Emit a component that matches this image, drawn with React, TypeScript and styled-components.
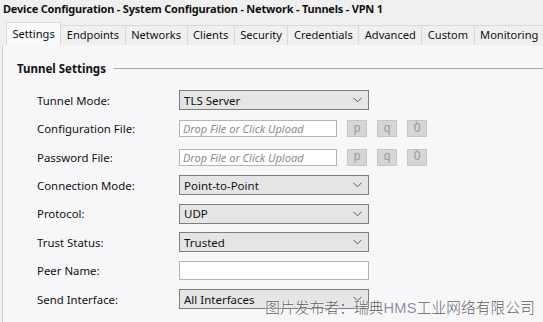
import React from "react";
import styled, { createGlobalStyle } from "styled-components";

const GlobalStyle = createGlobalStyle`
  html, body { margin: 0; padding: 0; background: #f0f0f0; }
  body { font-family: "Noto Sans", "Liberation Sans", sans-serif; color: #1a1a1a; }
  * { box-sizing: border-box; }
`;

const Window = styled.div`
  position: relative;
  width: 543px;
  height: 322px;
  overflow: hidden;
  display: flex;
  flex-direction: column;
  background: #f0f0f0;
`;

const Title = styled.div`
  height: 22px;
  padding: 1px 0 0 3px;
  font-size: 11px;
  font-weight: 700;
  line-height: 16px;
  color: #111;
  letter-spacing: -0.2px;
  white-space: nowrap;
`;

const TabBar = styled.div`
  display: flex;
  align-items: flex-end;
  height: 23px;
  padding-left: 6px;
`;

const Tab = styled.div<{ $active?: boolean }>`
  height: ${(p) => (p.$active ? "23px" : "20px")};
  padding: ${(p) => (p.$active ? "2px 5.5px 0" : "0 5.5px")};
  border: 1px solid #d9d9d9;
  border-bottom: none;
  margin-left: ${(p) => (p.$active ? "0" : "-1px")};
  background: ${(p) => (p.$active ? "#f9f9f9" : "#f0f0f0")};
  font-size: 11.1px;
  line-height: 18px;
  color: #111;
  white-space: nowrap;
  position: relative;
  z-index: ${(p) => (p.$active ? 1 : 0)};
`;

const Panel = styled.div`
  flex: 1;
  margin-left: 2px;
  border-left: 1px solid #cfcfcf;
  background: #f7f7f9;
  padding-top: 15px;
`;

const GroupHeader = styled.div`
  display: flex;
  align-items: center;
  padding-left: 14px;
  height: 16px;
`;

const GroupLabel = styled.div`
  font-size: 11.5px;
  font-weight: 700;
  color: #111;
  white-space: nowrap;
`;

const GroupLine = styled.div`
  flex: 1;
  height: 1px;
  margin-left: 8px;
  background: #a8a8a8;
`;

const Form = styled.div`
  display: grid;
  grid-template-columns: 142px 190px auto;
  grid-auto-rows: 28.43px;
  align-items: center;
  padding: 10px 0 0 34px;
`;

const Label = styled.div`
  font-size: 11.4px;
  color: #111;
  white-space: nowrap;
`;

const SelectBox = styled.div`
  height: 20px;
  border: 1px solid #7d7d7d;
  background: #e5e5e5;
  display: flex;
  align-items: center;
  justify-content: space-between;
  padding: 0 6px 0 4px;
  font-size: 11.5px;
  color: #111;
`;

const TextBox = styled.div<{ $width?: number }>`
  height: ${(p) => (p.$width ? "17px" : "19px")};
  width: ${(p) => (p.$width ? `${p.$width}px` : "100%")};
  border: 1px solid #b4b4b4;
  background: #ffffff;
  display: flex;
  align-items: center;
  padding-left: 3px;
  font-size: 11px;
  font-style: italic;
  color: #8a8a8a;
  white-space: nowrap;
`;

const FileRow = styled.div`
  display: flex;
  align-items: center;
  gap: 10px;
  grid-column: 2 / span 2;
`;

const Buttons = styled.div`
  display: flex;
  gap: 10px;
`;

const IconButton = styled.div`
  width: 20px;
  height: 17px;
  border: 1px solid #c6c6c6;
  background: #d6d6d6;
  display: flex;
  align-items: center;
  justify-content: center;
  font-family: "Liberation Mono", "DejaVu Sans Mono", monospace;
  font-size: 12px;
  color: #9a9a9a;
  line-height: 1;
`;

const Watermark = styled.div`
  position: absolute;
  right: 8px;
  bottom: 5px;
  font-family: "Noto Sans CJK SC", "Noto Sans", sans-serif;
  font-size: 14.6px;
  font-weight: 300;
  color: #5e5e5e;
  letter-spacing: 0.2px;
  text-shadow: 0 0 2px #ffffff, 0 0 2px #ffffff;
  white-space: nowrap;
`;

const Latin = styled.span`
  color: #8f8aa8;
  font-family: "Liberation Sans", sans-serif;
`;

const Chevron = () => (
  <svg width="9" height="6" viewBox="0 0 9 6" fill="none">
    <path d="M0.5 0.8 L4.5 4.8 L8.5 0.8" stroke="#555" strokeWidth="1" />
  </svg>
);

const Select = ({ value }: { value: string }) => (
  <SelectBox>
    <span>{value}</span>
    <Chevron />
  </SelectBox>
);

const FileInput = () => (
  <FileRow>
    <TextBox $width={158}>Drop File or Click Upload</TextBox>
    <Buttons>
      <IconButton>p</IconButton>
      <IconButton>q</IconButton>
      <IconButton>Ò</IconButton>
    </Buttons>
  </FileRow>
);

const tabs = [
  "Settings",
  "Endpoints",
  "Networks",
  "Clients",
  "Security",
  "Credentials",
  "Advanced",
  "Custom",
  "Monitoring",
];

export default function App() {
  return (
    <>
      <GlobalStyle />
      <Window>
        <Title>Device Configuration - System Configuration - Network - Tunnels - VPN 1</Title>
        <TabBar>
          {tabs.map((t, i) => (
            <Tab key={t} $active={i === 0}>
              {t}
            </Tab>
          ))}
        </TabBar>
        <Panel>
          <GroupHeader>
            <GroupLabel>Tunnel Settings</GroupLabel>
            <GroupLine />
          </GroupHeader>
          <Form>
            <Label>Tunnel Mode:</Label>
            <Select value="TLS Server" />
            <span />
            <Label>Configuration File:</Label>
            <FileInput />
            <Label>Password File:</Label>
            <FileInput />
            <Label>Connection Mode:</Label>
            <Select value="Point-to-Point" />
            <span />
            <Label>Protocol:</Label>
            <Select value="UDP" />
            <span />
            <Label>Trust Status:</Label>
            <Select value="Trusted" />
            <span />
            <Label>Peer Name:</Label>
            <TextBox />
            <span />
            <Label>Send Interface:</Label>
            <Select value="All Interfaces" />
            <span />
          </Form>
        </Panel>
        <Watermark>
          图片发布者：瑞典<Latin>HMS</Latin>工业网络有限公司
        </Watermark>
      </Window>
    </>
  );
}
